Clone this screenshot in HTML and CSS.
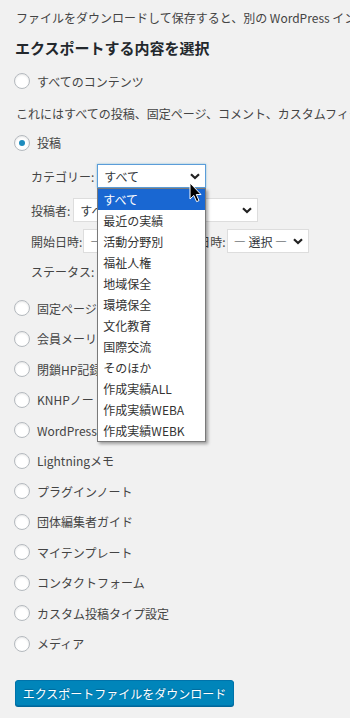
FILE: index.html
```html
<!DOCTYPE html>
<html lang="ja">
  <head>
    <meta charset="UTF-8" />
    <meta name="viewport" content="width=device-width, initial-scale=1.0" />
    <title>エクスポート</title>
    <link rel="stylesheet" href="styles.css">
  </head>

  <body>
    <div class="wrap">
      <p class="intro">ファイルをダウンロードして保存すると、別の WordPress インストールにこのサイトのコンテンツをインポートできます。</p>
      <h2>エクスポートする内容を選択</h2>

      <div class="choice first"><span class="radio"></span>すべてのコンテンツ</div>
      <p class="desc">これにはすべての投稿、固定ページ、コメント、カスタムフィールド、タームが含まれます。</p>

      <div class="choice"><span class="radio checked"></span>投稿</div>

      <!-- post filters -->
      <ul class="filters">
        <li class="row-cat">
          <label>カテゴリー:</label>
          <div class="dd">
            <span class="select focus cat">すべて
              <svg class="chev" width="10" height="7" viewBox="0 0 10 7"><path d="M1 1.2 L5 5 L9 1.2" fill="none" stroke="#222" stroke-width="2.2"/></svg>
            </span>
            <ul class="options">
              <li class="on">すべて</li>
              <li>最近の実績</li>
              <li>活動分野別</li>
              <li>福祉人権</li>
              <li>地域保全</li>
              <li>環境保全</li>
              <li>文化教育</li>
              <li>国際交流</li>
              <li>そのほか</li>
              <li>作成実績ALL</li>
              <li>作成実績WEBA</li>
              <li>作成実績WEBK</li>
            </ul>
            <svg class="cursor" width="13" height="21" viewBox="0 0 13 21"><path d="M1 1 L1 17 L4.8 13.4 L7.6 19.6 L10 18.6 L7.3 12.5 L12 12.5 Z" fill="#000" stroke="#fff" stroke-width="1"/></svg>
          </div>
        </li>
        <li class="row-author">
          <label>投稿者:</label>
          <span class="select author">すべて
            <svg class="chev" width="10" height="7" viewBox="0 0 10 7"><path d="M1 1.2 L5 5 L9 1.2" fill="none" stroke="#222" stroke-width="2.2"/></svg>
          </span>
        </li>
        <li class="row-date">
          <label>開始日時:</label>
          <span class="select date-start">— 選択 —
            <svg class="chev" width="10" height="7" viewBox="0 0 10 7"><path d="M1 1.2 L5 5 L9 1.2" fill="none" stroke="#222" stroke-width="2.2"/></svg>
          </span>
          <label class="end">終了日時:</label>
          <span class="select date-end">— 選択 —
            <svg class="chev" width="10" height="7" viewBox="0 0 10 7"><path d="M1 1.2 L5 5 L9 1.2" fill="none" stroke="#222" stroke-width="2.2"/></svg>
          </span>
        </li>
        <li class="row-status">
          <label>ステータス:</label>
        </li>
      </ul>

      <div class="choice"><span class="radio"></span>固定ページ</div>
      <div class="choice"><span class="radio"></span>会員メーリングリスト</div>
      <div class="choice"><span class="radio"></span>閉鎖HP記録</div>
      <div class="choice"><span class="radio"></span>KNHPノート</div>
      <div class="choice"><span class="radio"></span>WordPress教材</div>
      <div class="choice"><span class="radio"></span>Lightningメモ</div>
      <div class="choice"><span class="radio"></span>プラグインノート</div>
      <div class="choice"><span class="radio"></span>団体編集者ガイド</div>
      <div class="choice"><span class="radio"></span>マイテンプレート</div>
      <div class="choice"><span class="radio"></span>コンタクトフォーム</div>
      <div class="choice"><span class="radio"></span>カスタム投稿タイプ設定</div>
      <div class="choice"><span class="radio"></span>メディア</div>

      <button class="btn">エクスポートファイルをダウンロード</button>
    </div>
  </body>
</html>
```

FILE: styles.css
```css
* {
  margin: 0;
  padding: 0;
  box-sizing: border-box;
}

html,
body {
  width: 350px;
  height: 718px;
  overflow: hidden;
}

body {
  background-color: #f1f1f1;
  color: #444444;
  font-family: "Noto Sans CJK JP", "Noto Sans", sans-serif;
  font-size: 12px;
}

.wrap {
  padding-left: 16px;
}

.intro {
  margin-top: 8px;
  line-height: 20px;
  white-space: nowrap;
}

h2 {
  margin-top: 10px;
  margin-left: -1px;
  font-size: 15px;
  line-height: 20px;
  font-weight: bold;
  color: #23282d;
}

.choice {
  display: flex;
  align-items: center;
  height: 30.5px;
  white-space: nowrap;
}

.choice.first {
  margin-top: 8px;
}

.radio {
  flex-shrink: 0;
  width: 16px;
  height: 16px;
  margin-left: -2px;
  margin-right: 7px;
  border: 1px solid #b4b9be;
  border-radius: 50%;
  background-color: #ffffff;
  box-shadow: inset 0 1px 2px rgba(0, 0, 0, 0.1);
  display: flex;
  align-items: center;
  justify-content: center;
}

.radio.checked::after {
  content: "";
  width: 6px;
  height: 6px;
  border-radius: 50%;
  background-color: #1e8cbe;
}

.desc {
  margin-top: 7px;
  line-height: 20px;
  white-space: nowrap;
  margin-bottom: 4px;
}

.filters {
  list-style: none;
  margin: 6px 0 10px 15px;
}

.filters > li {
  display: flex;
  align-items: center;
  height: 24px;
  white-space: nowrap;
}

.filters > li > * {
  flex-shrink: 0;
}

.row-cat {
  margin-bottom: 10px;
}

.row-author {
  margin-bottom: 7px;
}

.row-date {
  margin-bottom: 6px;
}

.filters label {
  margin-right: 3px;
}

.row-date label {
  margin-right: 1px;
}

.filters label.end {
  margin-left: 7px;
}

.select {
  position: relative;
  display: flex;
  align-items: center;
  height: 24px;
  padding-left: 6px;
  background-color: #ffffff;
  border: 1px solid #dddddd;
  color: #32373c;
  font-size: 12px;
  overflow: hidden;
}

.select .chev {
  position: absolute;
  right: 5px;
  top: 8px;
}

.select.focus {
  overflow: visible;
  border-color: #5b9dd9;
  box-shadow: 0 0 2px rgba(30, 140, 190, 0.5);
}

.cat {
  width: 109px;
}

.author {
  width: 185px;
}

.date-start {
  width: 84px;
}

.date-end {
  width: 82px;
}

.dd {
  position: relative;
}

.options {
  position: absolute;
  left: 0;
  top: 24px;
  width: 109px;
  list-style: none;
  background-color: #ffffff;
  border: 1px solid #7a7a7a;
  box-shadow: 2px 2px 3px rgba(0, 0, 0, 0.35);
  z-index: 5;
}

.options li {
  height: 21px;
  line-height: 21px;
  padding-left: 5px;
  color: #333333;
  font-size: 12px;
}

.options li.on {
  background-color: #1967d2;
  color: #ffffff;
}

.cursor {
  position: absolute;
  left: 92px;
  top: 18px;
  z-index: 6;
}

.btn {
  margin-top: 21px;
  margin-left: -1px;
  height: 26px;
  width: 219px;
  background-color: #0085ba;
  border: 1px solid #0073aa;
  border-radius: 3px;
  box-shadow: 0 1px 0 #006799;
  color: #ffffff;
  font-family: "Noto Sans CJK JP", "Noto Sans", sans-serif;
  font-size: 12px;
  text-shadow: 0 -1px 1px #006799;
}
```
